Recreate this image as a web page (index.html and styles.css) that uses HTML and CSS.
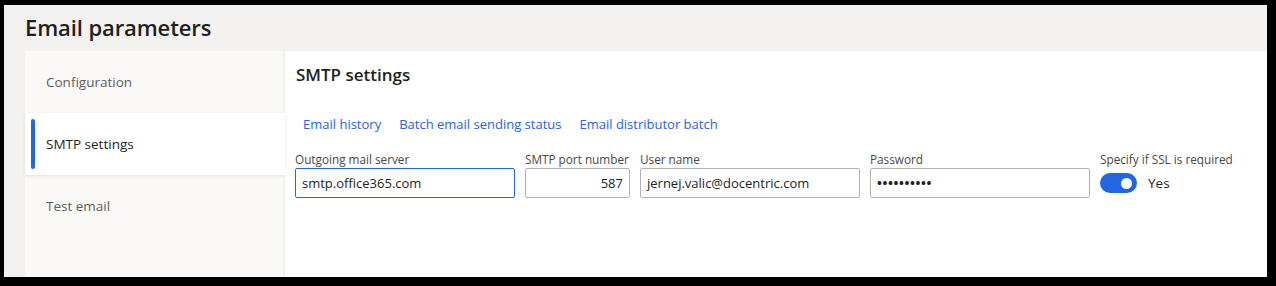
FILE: index.html
```html
<!DOCTYPE html>
<html lang="en">
<head>
<meta charset="utf-8">
<title>Email parameters</title>
<link rel="stylesheet" href="styles.css">
</head>
<body>
<div class="frame">
  <header class="page-header">
    <h1 class="page-title">Email parameters</h1>
  </header>
  <div class="workspace">
    <nav class="tabs">
      <div class="tab">Configuration</div>
      <div class="tab tab-active"><span class="tab-marker"></span>SMTP settings</div>
      <div class="tab">Test email</div>
    </nav>
    <main class="panel">
      <h2 class="panel-title">SMTP settings</h2>
      <div class="links">
        <a class="link">Email history</a>
        <a class="link">Batch email sending status</a>
        <a class="link">Email distributor batch</a>
      </div>
      <div class="fields">
        <div class="field field-wide">
          <label class="field-label">Outgoing mail server</label>
          <div class="input input-focus">smtp.office365.com</div>
        </div>
        <div class="field field-port">
          <label class="field-label">SMTP port number</label>
          <div class="input input-num">587</div>
        </div>
        <div class="field field-wide">
          <label class="field-label">User name</label>
          <div class="input">jernej.valic@docentric.com</div>
        </div>
        <div class="field field-wide">
          <label class="field-label">Password</label>
          <div class="input input-pass">••••••••••</div>
        </div>
        <div class="field">
          <label class="field-label">Specify if SSL is required</label>
          <div class="toggle-row">
            <span class="toggle"><span class="knob"></span></span>
            <span class="toggle-text">Yes</span>
          </div>
        </div>
      </div>
    </main>
  </div>
</div>
</body>
</html>
```
FILE: styles.css
```css
html, body {
  margin: 0;
  padding: 0;
  height: 100%;
}
body {
  background: #000;
  font-family: "Open Sans", "Noto Sans", sans-serif;
  color: #201f1e;
}
.frame {
  box-sizing: border-box;
  margin: 5px 9px 0 4px;
  height: 272px;
  background: #f3f2f1;
  display: flex;
  flex-direction: column;
  overflow: hidden;
}
.page-header {
  height: 46px;
  flex: none;
  display: flex;
  align-items: center;
  padding-left: 21px;
}
.page-title {
  margin: 0;
  font-size: 22px;
  font-weight: 600;
  letter-spacing: -0.1px;
  color: #201f1e;
  line-height: 1;
  padding-bottom: 2px;
}
.workspace {
  flex: 1;
  display: flex;
  padding-left: 21px;
}
.tabs {
  width: 260px;
  flex: none;
  background: #faf9f8;
  display: flex;
  flex-direction: column;
}
.tab {
  position: relative;
  height: 62px;
  display: flex;
  align-items: center;
  padding-left: 21px;
  font-size: 13.5px;
  color: #605e5c;
}
.tab-active {
  background: #fff;
  color: #201f1e;
  box-shadow: 0 1px 3px rgba(0, 0, 0, 0.1);
}
.tab-marker {
  position: absolute;
  left: 6px;
  top: 6px;
  bottom: 6px;
  width: 4px;
  border-radius: 2px;
  background: #2266e3;
}
.panel {
  flex: 1;
  background: #fff;
  box-shadow: -1px 0 2px rgba(0, 0, 0, 0.06);
  padding: 14px 11px 0 11px;
}
.panel-title {
  margin: 0;
  font-size: 17px;
  font-weight: 600;
  color: #201f1e;
  line-height: 20px;
}
.links {
  display: flex;
  gap: 18px;
  margin-top: 29px;
  padding-left: 7px;
  line-height: 20px;
}
.link {
  font-size: 13px;
  color: #2266e3;
  cursor: pointer;
}
.fields {
  display: flex;
  gap: 10px;
  margin-top: 17px;
  margin-left: -1px;
}
.field {
  display: flex;
  flex-direction: column;
}
.field-wide { width: 220px; }
.field-port { width: 105px; }
.field-label {
  font-size: 11.75px;
  font-weight: 500;
  color: #4a4846;
  line-height: 17px;
  height: 17px;
  white-space: nowrap;
}
.input {
  box-sizing: border-box;
  height: 30px;
  border: 1px solid #b3b0ad;
  border-radius: 2px;
  padding: 0 6px;
  font-size: 13px;
  line-height: 28px;
  color: #201f1e;
  white-space: nowrap;
  overflow: hidden;
}
.input-focus {
  border-color: #2266e3;
}
.input-num {
  text-align: right;
}
.input-pass {
  letter-spacing: 0.6px;
  font-size: 13px;
  font-weight: 700;
}
.toggle-row {
  display: flex;
  align-items: center;
  height: 30px;
  gap: 11px;
}
.toggle {
  box-sizing: border-box;
  width: 37px;
  height: 20px;
  border-radius: 10px;
  background: #2266e3;
  display: flex;
  align-items: center;
  justify-content: flex-end;
  padding-right: 5px;
}
.knob {
  width: 11px;
  height: 11px;
  border-radius: 50%;
  background: #fff;
}
.toggle-text {
  font-size: 13.5px;
  color: #201f1e;
}
```
